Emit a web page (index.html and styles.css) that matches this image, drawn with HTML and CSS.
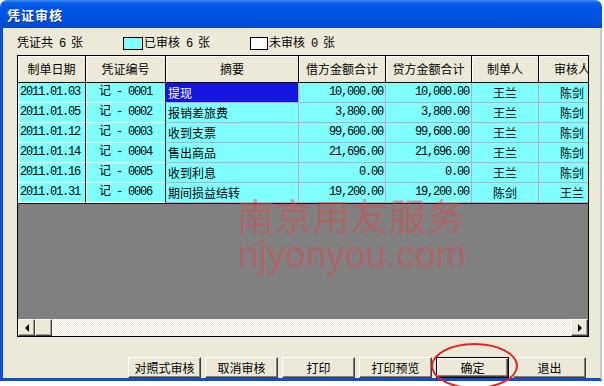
FILE: index.html
```html
<!DOCTYPE html>
<html>
<head>
<meta charset="utf-8">
<link rel="stylesheet" href="styles.css">
</head>
<body>
<div class="window">
  <div class="titlebar"><span class="title">凭证审核</span></div>
  <div class="frame">
    <div class="legend">
      <span class="total">凭证共<b class="num"> 6 </b>张</span>
      <span class="key key-done"><i class="swatch cyan"></i><span>已审核<b class="num"> 6 </b>张</span></span>
      <span class="key"><i class="swatch white"></i><span>未审核<b class="num"> 0 </b>张</span></span>
    </div>
    <div class="grid">
      <div class="row head">
        <div class="c c1">制单日期</div>
        <div class="c c2">凭证编号</div>
        <div class="c c3">摘要</div>
        <div class="c c4">借方金额合计</div>
        <div class="c c5">贷方金额合计</div>
        <div class="c c6">制单人</div>
        <div class="c c7">审核人</div>
      </div>
      <div class="row">
        <div class="c c1 num">2011.01.03</div>
        <div class="c c2 num">记 - 0001</div>
        <div class="c c3 sel">提现</div>
        <div class="c c4 num">10,000.00</div>
        <div class="c c5 num">10,000.00</div>
        <div class="c c6">王兰</div>
        <div class="c c7">陈剑</div>
      </div>
      <div class="row">
        <div class="c c1 num">2011.01.05</div>
        <div class="c c2 num">记 - 0002</div>
        <div class="c c3">报销差旅费</div>
        <div class="c c4 num">3,800.00</div>
        <div class="c c5 num">3,800.00</div>
        <div class="c c6">王兰</div>
        <div class="c c7">陈剑</div>
      </div>
      <div class="row">
        <div class="c c1 num">2011.01.12</div>
        <div class="c c2 num">记 - 0003</div>
        <div class="c c3">收到支票</div>
        <div class="c c4 num">99,600.00</div>
        <div class="c c5 num">99,600.00</div>
        <div class="c c6">王兰</div>
        <div class="c c7">陈剑</div>
      </div>
      <div class="row">
        <div class="c c1 num">2011.01.14</div>
        <div class="c c2 num">记 - 0004</div>
        <div class="c c3">售出商品</div>
        <div class="c c4 num">21,696.00</div>
        <div class="c c5 num">21,696.00</div>
        <div class="c c6">王兰</div>
        <div class="c c7">陈剑</div>
      </div>
      <div class="row">
        <div class="c c1 num">2011.01.16</div>
        <div class="c c2 num">记 - 0005</div>
        <div class="c c3">收到利息</div>
        <div class="c c4 num">0.00</div>
        <div class="c c5 num">0.00</div>
        <div class="c c6">王兰</div>
        <div class="c c7">陈剑</div>
      </div>
      <div class="row">
        <div class="c c1 num">2011.01.31</div>
        <div class="c c2 num">记 - 0006</div>
        <div class="c c3">期间损益结转</div>
        <div class="c c4 num">19,200.00</div>
        <div class="c c5 num">19,200.00</div>
        <div class="c c6">陈剑</div>
        <div class="c c7">王兰</div>
      </div>
      <div class="empty"></div>
      <div class="hscroll">
        <div class="sbtn"><span class="tri-left"></span></div>
        <div class="sbtn thumb"></div>
        <div class="track"></div>
        <div class="sbtn"><span class="tri-right"></span></div>
      </div>
    </div>
    <div class="buttons">
      <button class="btn">对照式审核</button>
      <button class="btn">取消审核</button>
      <button class="btn">打印</button>
      <button class="btn">打印预览</button>
      <button class="btn default">确定</button>
      <button class="btn">退出</button>
    </div>
  </div>
</div>
<div class="watermark">
  <div class="wm-cn">南京用友服务</div>
  <div class="wm-en">njyonyou.com</div>
</div>
<div class="circle"></div>
</body>
</html>
```

FILE: styles.css
```css
* { box-sizing: border-box; margin: 0; padding: 0; }

body {
  width: 604px;
  height: 386px;
  overflow: hidden;
  position: relative;
  background: #fff;
  font-family: "Noto Sans CJK SC", sans-serif;
  font-size: 12px;
  color: #000;
}

.window {
  width: 602px;
  height: 381px;
  display: flex;
  flex-direction: column;
}

.titlebar {
  height: 28px;
  flex-shrink: 0;
  border-radius: 7px 7px 0 0;
  background: linear-gradient(#3d8ef5 0, #0a5fe8 3px, #0056e4 8px, #0052df 20px, #0048cc 28px);
  display: flex;
  align-items: center;
  padding-left: 7px;
}

.title {
  color: #fff;
  font-weight: bold;
  font-size: 13px;
  letter-spacing: 1px;
  text-shadow: 1px 1px #0a2a9a;
}

.frame {
  flex: 1;
  background: #ece9d8;
  border-left: 3px solid #0b4fd6;
  border-right: 2px solid #c9c9d6;
  border-bottom: 3px solid #0b4fd6;
  display: flex;
  flex-direction: column;
  padding: 8px 14px 0 14px;
}

.num {
  font-family: "Liberation Mono", "Noto Sans CJK SC", monospace;
  font-size: 12px;
  letter-spacing: -1.2px;
  font-weight: normal;
}

.legend {
  height: 14px;
  line-height: 14px;
  display: flex;
  align-items: center;
  white-space: pre;
}

.total { width: 106px; }
.key { display: flex; align-items: center; }
.key-done { width: 127px; }

.swatch {
  display: inline-block;
  width: 20px;
  height: 13px;
  border: 1px solid #000;
  margin-right: 1px;
}
.swatch.cyan { background: #80ffff; }
.swatch.white { width: 18px; background: #fff; }

.grid {
  width: 572px;
  height: 282px;
  margin-top: 5px;
  border: 1px solid #000;
  background: #808080;
  overflow: hidden;
  display: flex;
  flex-direction: column;
}

.row {
  display: flex;
  height: 20px;
  flex-shrink: 0;
  background: #80ffff;
}

.c {
  flex-shrink: 0;
  height: 100%;
  line-height: 19px;
  white-space: nowrap;
  overflow: hidden;
  border-right: 1px solid #c4a4c8;
  border-bottom: 1px solid #c4a4c8;
  padding: 0 2px;
}

.c1 { width: 68px; border-right-color: #000; border-bottom-color: #fff; box-shadow: inset 1px 0 #fff; }
.c2 { width: 80px; text-align: center; border-right-color: #000; border-bottom-color: #fff; box-shadow: inset 1px 0 #fff; }
.c3 { width: 133px; }
.c4 { width: 87px; text-align: right; }
.c5 { width: 86px; text-align: right; }
.c6 { width: 67px; text-align: center; }
.c7 { width: 67px; text-align: center; }

.sel {
  background: #1616e2;
  color: #fff;
}

.head {
  height: 27px;
  background: #ece9d8;
}

.head .c {
  line-height: 26px;
  text-align: center;
  border-right: 1px solid #000;
  border-bottom: 1px solid #000;
  box-shadow: inset 1px 1px #fff;
}

.empty {
  flex: 1;
  background: #808080;
  border-top: 1px solid #1a1a1a;
}

.hscroll {
  height: 17px;
  flex-shrink: 0;
  display: flex;
  background: #f4f3ec;
}

.sbtn {
  width: 17px;
  height: 17px;
  flex-shrink: 0;
  background: #ece9d8;
  border: 1px solid;
  border-color: #f8f8f4 #404040 #404040 #f8f8f4;
  box-shadow: inset -1px -1px #a0a0a0;
  display: flex;
  align-items: center;
  justify-content: center;
}

.track {
  flex: 1;
  background-color: #ece9d8;
  background-image: repeating-conic-gradient(#fff 0 25%, #ece9d8 0 50%);
  background-size: 2px 2px;
}

.tri-left {
  width: 0;
  height: 0;
  border-top: 4px solid transparent;
  border-bottom: 4px solid transparent;
  border-right: 4px solid #000;
}

.tri-right {
  width: 0;
  height: 0;
  border-top: 4px solid transparent;
  border-bottom: 4px solid transparent;
  border-left: 4px solid #000;
}

.buttons {
  margin-top: 20px;
  display: flex;
  justify-content: flex-end;
  gap: 4px;
}

.btn {
  width: 73px;
  height: 21px;
  font-family: "Noto Sans CJK SC", sans-serif;
  font-size: 12px;
  color: #000;
  background: #ece9d8;
  border: 1px solid;
  border-color: #fff #404040 #404040 #fff;
  box-shadow: inset -1px -1px #808080;
}

.btn.default {
  border-color: #000;
  box-shadow: inset 1px 1px #fff, inset -1px -1px #404040, inset -2px -2px #808080;
}

.watermark {
  position: absolute;
  left: 237px;
  top: 197px;
  color: rgba(222, 70, 70, 0.48);
  pointer-events: none;
}

.wm-cn {
  font-family: "Noto Sans CJK SC", sans-serif;
  font-size: 37px;
  line-height: 37px;
  letter-spacing: 1px;
}

.wm-en {
  font-family: "Liberation Sans", sans-serif;
  font-size: 37px;
  line-height: 37px;
  margin-top: 2px;
  padding-left: 1px;
}

.circle {
  position: absolute;
  left: 431px;
  top: 343px;
  width: 87px;
  height: 46px;
  border: 2px solid #e02424;
  border-radius: 50%;
}
```
